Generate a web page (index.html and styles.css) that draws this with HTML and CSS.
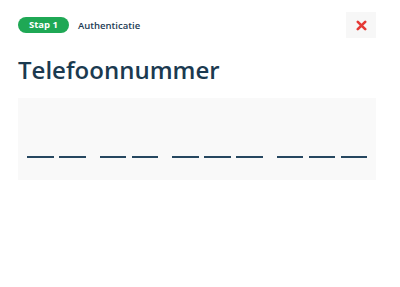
FILE: index.html
```html
<!DOCTYPE html>
<html lang="nl">
<head>
  <meta charset="UTF-8" />
  <meta name="viewport" content="width=device-width, initial-scale=1" />
  <title>Telefoonnummer</title>
  <link rel="stylesheet" href="styles.css">
</head>
<body>
<div class="container">
  <div class="topbar">
    <div class="stap">
      <span class="badge">Stap 1</span>
      <span class="stap-naam">Authenticatie</span>
    </div>
    <button class="sluiten" aria-label="Sluiten">
      <svg width="11" height="11" viewBox="0 0 11 11">
        <path d="M1.8 1.8 L9.2 9.2 M9.2 1.8 L1.8 9.2" stroke="#e53935" stroke-width="2.6" stroke-linecap="round" />
      </svg>
    </button>
  </div>

  <h1 class="titel">Telefoonnummer</h1>

  <div class="nummer-vak">
    <div class="groep"><span class="streep"></span><span class="streep"></span></div>
    <div class="groep"><span class="streep"></span><span class="streep"></span></div>
    <div class="groep"><span class="streep"></span><span class="streep"></span><span class="streep"></span></div>
    <div class="groep"><span class="streep"></span><span class="streep"></span><span class="streep"></span></div>
  </div>
</div>
</body>
</html>
```

FILE: styles.css
```css
body {
  margin: 0;
  font-family: 'Open Sans', sans-serif;
  background: #fff;
  color: #1b3a50;
}
.container {
  padding: 12px 24px 0 18px;
}
.topbar {
  display: flex;
  justify-content: space-between;
  align-items: center;
  height: 26px;
}
.stap {
  display: flex;
  align-items: center;
  gap: 9px;
}
.badge {
  background: #1fa855;
  color: #fff;
  font-size: 9.5px;
  font-weight: 700;
  border-radius: 8px;
  padding: 0 11px;
  height: 16px;
  line-height: 16px;
  width: 29px;
  text-align: center;
}
.stap-naam {
  font-size: 9.5px;
  font-weight: 600;
  color: #1d3c55;
}
.sluiten {
  width: 30px;
  height: 26px;
  border: none;
  background: #f7f7f7;
  padding: 0;
  display: flex;
  align-items: center;
  justify-content: center;
}
.titel {
  margin: 16px 0 0;
  font-size: 24px;
  font-weight: 600;
  line-height: 32px;
  color: #1b3a50;
}
.nummer-vak {
  margin-top: 12px;
  width: 358px;
  height: 82px;
  box-sizing: border-box;
  background: #f9f9f9;
  padding: 58px 0 0 9px;
  display: flex;
  gap: 14px;
}
.groep {
  display: flex;
  gap: 5.5px;
}
.streep {
  width: 26.5px;
  height: 2px;
  background: #264760;
}
```
